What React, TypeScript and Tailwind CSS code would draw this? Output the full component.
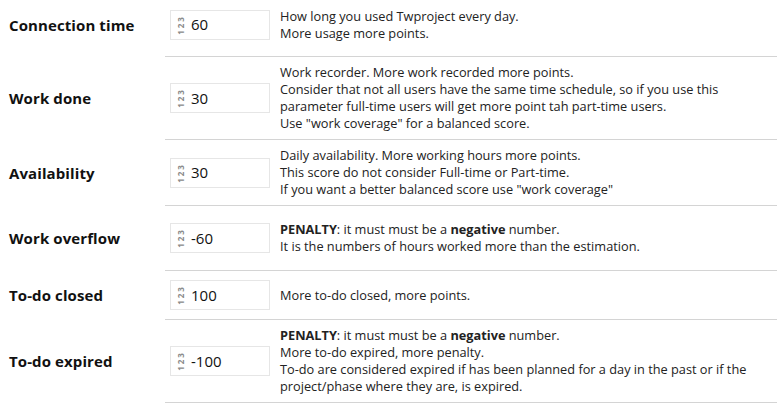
import React from 'react';

type Row = {
  label: string;
  value: string;
  h: string;
  extra?: string;
  lines: React.ReactNode[];
};

const rows: Row[] = [
  {
    label: 'Connection time',
    value: '60',
    h: 'h-[57px]',
    extra: 'pb-[7px]',
    lines: ['How long you used Twproject every day.', 'More usage more points.'],
  },
  {
    label: 'Work done',
    value: '30',
    h: 'h-[83px]',
    lines: [
      'Work recorder. More work recorded more points.',
      'Consider that not all users have the same time schedule, so if you use this',
      'parameter full-time users will get more point tah part-time users.',
      'Use "work coverage" for a balanced score.',
    ],
  },
  {
    label: 'Availability',
    value: '30',
    h: 'h-[66px]',
    lines: [
      'Daily availability. More working hours more points.',
      'This score do not consider Full-time or Part-time.',
      'If you want a better balanced score use "work coverage"',
    ],
  },
  {
    label: 'Work overflow',
    value: '-60',
    h: 'h-[65px]',
    lines: [
      <>
        <b>PENALTY</b>: it must must be a <b>negative</b> number.
      </>,
      'It is the numbers of hours worked more than the estimation.',
    ],
  },
  {
    label: 'To-do closed',
    value: '100',
    h: 'h-[49px]',
    lines: ['More to-do closed, more points.'],
  },
  {
    label: 'To-do expired',
    value: '-100',
    h: 'h-[83px]',
    lines: [
      <>
        <b>PENALTY</b>: it must must be a <b>negative</b> number.
      </>,
      'More to-do expired, more penalty.',
      'To-do are considered expired if has been planned for a day in the past or if the',
      'project/phase where they are, is expired.',
    ],
  },
];

const NumInput = ({ value }: { value: string }) => (
  <div className="w-[100px] h-[30px] border border-[#e6e6e6] bg-white flex items-center shrink-0">
    <span className="w-[20px] flex justify-center">
      <span className="inline-block -rotate-90 text-[8px] leading-none tracking-[2px] text-[#8a8a8a] font-bold">123</span>
    </span>
    <span className="text-[15px] text-[#111]">{value}</span>
  </div>
);

export default function App() {
  return (
    <div className="w-[777px] h-[405px] bg-white overflow-hidden" style={{ fontFamily: '"Open Sans", "Noto Sans", sans-serif' }}>
      {rows.map((r) => (
        <div key={r.label} className={`flex ${r.h}`}>
          <div className={`w-[165px] shrink-0 pl-[9px] flex items-center ${r.extra ?? ''}`}>
            <span className="text-[15px] font-bold text-[#111] tracking-[0.1px]">{r.label}</span>
          </div>
          <div className={`flex-1 flex items-center border-b border-[#d4d4d4] pl-[5px] ${r.extra ?? ''}`}>
            <NumInput value={r.value} />
            <div className="pl-[10px] text-[12.75px] leading-[17px] text-[#222] whitespace-nowrap">
              {r.lines.map((l, i) => (
                <div key={i}>{l}</div>
              ))}
            </div>
          </div>
        </div>
      ))}
    </div>
  );
}
